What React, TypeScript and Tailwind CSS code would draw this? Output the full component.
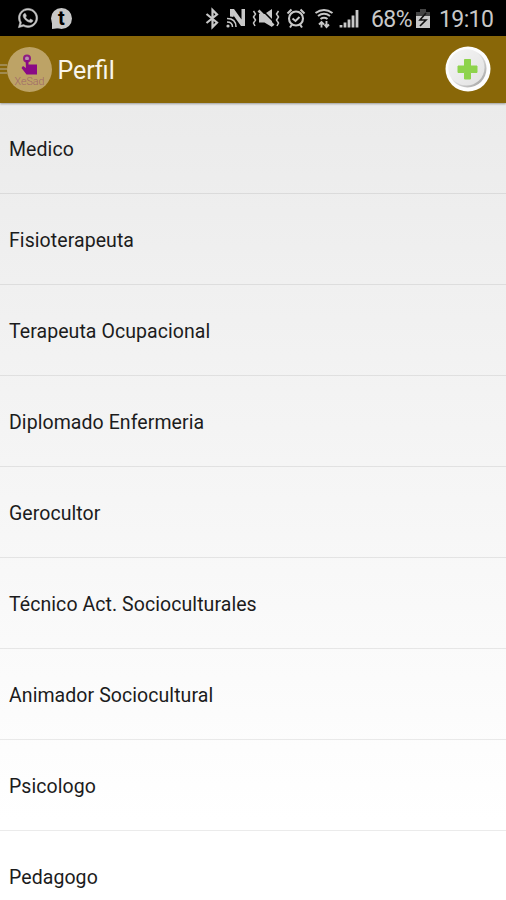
import type { ReactNode } from "react";
import { FaWhatsapp } from "react-icons/fa";

const PROFILES = [
  "Medico",
  "Fisioterapeuta",
  "Terapeuta Ocupacional",
  "Diplomado Enfermeria",
  "Gerocultor",
  "Técnico Act. Socioculturales",
  "Animador Sociocultural",
  "Psicologo",
  "Pedagogo",
];

function StatusIcon({ width, className = "", children }: { width: number; className?: string; children: ReactNode }) {
  return (
    <svg
      width={width}
      height={24}
      viewBox={`0 0 ${width} 24`}
      fill="none"
      stroke="currentColor"
      strokeWidth="1.8"
      className={`shrink-0 ${className}`}
    >
      {children}
    </svg>
  );
}

function StatusBar() {
  return (
    <div className="flex h-9 items-center bg-black text-[#c8c8c8]">
      <FaWhatsapp className="ml-[17px] size-[22px] shrink-0" stroke="currentColor" strokeWidth="12" />
      <div className="relative ml-3 flex size-[21px] shrink-0 items-center justify-center rounded-full bg-[#c8c8c8]">
        <svg viewBox="0 0 21 21" className="absolute inset-0 size-full fill-[#c8c8c8]">
          <path d="M1 21V13L9 20Z" />
        </svg>
        <span className="relative text-[20px] leading-none font-bold text-black">t</span>
      </div>

      {/* Bluetooth */}
      <StatusIcon width={14} className="ml-[133px]">
        <path d="M1.5 8 12 16.5 7.5 21V4L12 8.500 1.5 17" strokeWidth="2.2" />
      </StatusIcon>
      {/* NFC */}
      <StatusIcon width={20} className="ml-[7px]">
        <path d="M4 10.500V3h4l7.500 10.500V3H19v17h-4L7.500 9.500v1.500z" fill="currentColor" stroke="none" />
        <path d="M1 12.5q9 0 9 8.5M1 16q5.500 0 5.500 5" strokeWidth="1.5" />
        <circle cx="2" cy="20" r="1.6" fill="currentColor" stroke="none" />
      </StatusIcon>
      {/* Vibrate */}
      <StatusIcon width={28} className="ml-[6px]">
        <path d="M7 8h5.500l7.500-5v18l-7.500-4.500H7z" fill="currentColor" stroke="none" />
        <path d="M10.500 4.500l12 12" stroke="#000" strokeWidth="1.6" />
        <path d="M6.500 4.500l15 15" strokeWidth="2.6" />
        <path d="M1.500 5l2 3-2 3 2 3-2 3 1.500 3M26.500 5l-2 3 2 3-2 3 2 3-1.500 3" strokeWidth="1.5" />
      </StatusIcon>
      {/* Alarm */}
      <StatusIcon width={20} className="ml-[6px]">
        <circle cx="10" cy="12.5" r="7" strokeWidth="2.1" />
        <path d="M6.5 12.5l3 2.5 4-4M1.500 7.500l4-4M18.500 7.500l-4-4M4 21.500l2-3M16 21.500l-2-3" strokeWidth="2" />
      </StatusIcon>
      {/* Wi-Fi */}
      <StatusIcon width={20} className="ml-[8px]">
        <path d="M1.5 7q8.500-6 17 0M4 10q6-4.500 12 0M6.500 13q3.500-2.500 7 0" strokeWidth="2.1" />
        <path d="M7.500 21.500v-6M5 18.500l2.500-2.500L10 18.500M12.500 15v6M10.500 18.500l2 2.500 2.500-2.500" strokeWidth="1.9" />
      </StatusIcon>
      {/* Signal */}
      <StatusIcon width={20} className="ml-[5px]">
        <path d="M2 21.500v-2.500M6 21.500v-5M10 21.500v-8M14 21.500V9.500M18 21.500V4" strokeWidth="2.8" />
      </StatusIcon>

      <span className="ml-[12px] w-[41px] pt-[3px] text-[23px] leading-9 tracking-[-0.6px] whitespace-nowrap">68%</span>
      {/* Battery */}
      <StatusIcon width={14} className="ml-[4px]">
        <path d="M0 6h4V3h6v3h4v5H0z" fill="#444" stroke="none" />
        <path d="M0 10h14v12H0z" fill="currentColor" stroke="none" />
        <path d="M10 7L4 14h6l-6 6" stroke="#111" strokeWidth="1.6" />
      </StatusIcon>
      <span className="ml-[9px] pt-[3px] text-[23px] leading-9 tracking-[-0.6px] whitespace-nowrap">19:10</span>
    </div>
  );
}

function Logo() {
  return (
    <svg viewBox="0 0 45 45" className="size-[45px] shrink-0">
      <circle cx="22.5" cy="22.5" r="22.5" fill="#bda366" />
      <circle cx="20" cy="11.5" r="3" fill="#b78faf" stroke="#8f1c82" strokeWidth="2" />
      <path d="M18.500 13h3v4.500H30v10H19.500l-5-6.500 1.500-2 3 2z" fill="#8a0a86" />
      <text
        x="7.5"
        y="38"
        textLength="30"
        lengthAdjust="spacingAndGlyphs"
        fontSize="11"
        fontWeight="300"
        fill="#a0686a"
      >
        XeSad
      </text>
    </svg>
  );
}

function AddButton() {
  return (
    <button className="mr-[15.5px] shrink-0" aria-label="Add">
      <svg viewBox="0 0 46 46" className="size-[46px]">
        <defs>
          <linearGradient id="face" x1="0" y1="0" x2="1" y2="1">
            <stop offset="0" stopColor="#f5f5f5" />
            <stop offset="1" stopColor="#e2e2e2" />
          </linearGradient>
          <linearGradient id="rim" x1="0" y1="0" x2="1" y2="1">
            <stop offset="0.4" stopColor="#eeeeee" />
            <stop offset="1" stopColor="#999999" />
          </linearGradient>
        </defs>
        <circle cx="23" cy="23" r="22.5" fill="#fdfdfd" />
        <circle cx="22.5" cy="22.5" r="19" fill="url(#rim)" />
        <circle cx="21.5" cy="21.5" r="18" fill="url(#face)" />
        <path
          d="M19.500 13.500h6v6.500h6.500v6.500h-6.500V33h-6v-6.500H13V20h6.500z"
          fill="#8ed34c"
          stroke="#8ed34c"
          strokeLinejoin="round"
        />
      </svg>
    </button>
  );
}

function ActionBar() {
  return (
    <header className="relative z-10 flex h-[66.5px] items-center bg-[#896708] shadow-[0_1px_2px_rgba(0,0,0,0.35)]">
      <div className="flex w-[6.5px] shrink-0 flex-col gap-[2px]">
        <span className="h-[2px] bg-[#a08a50]" />
        <span className="h-[2px] bg-[#a08a50]" />
        <span className="h-[2px] bg-[#a08a50]" />
      </div>
      <Logo />
      <h1 className="ml-[6px] flex-1 pt-[3px] text-[25px] text-[#f8f5ec]">Perfil</h1>
      <AddButton />
    </header>
  );
}

export default function App() {
  return (
    <div className="flex h-[900px] w-full flex-col overflow-hidden bg-white font-['Roboto',sans-serif]">
      <StatusBar />
      <ActionBar />
      <ul className="min-h-0 flex-1 overflow-hidden bg-linear-to-b from-[#ebebeb] to-white to-90%">
        {PROFILES.map((name) => (
          <li
            key={name}
            className="flex h-[91.1px] items-center border-b border-black/8 pt-[3.5px] pl-[9px] text-[19.5px] tracking-[0.07px] text-[#1c1c1c]"
          >
            {name}
          </li>
        ))}
      </ul>
    </div>
  );
}
